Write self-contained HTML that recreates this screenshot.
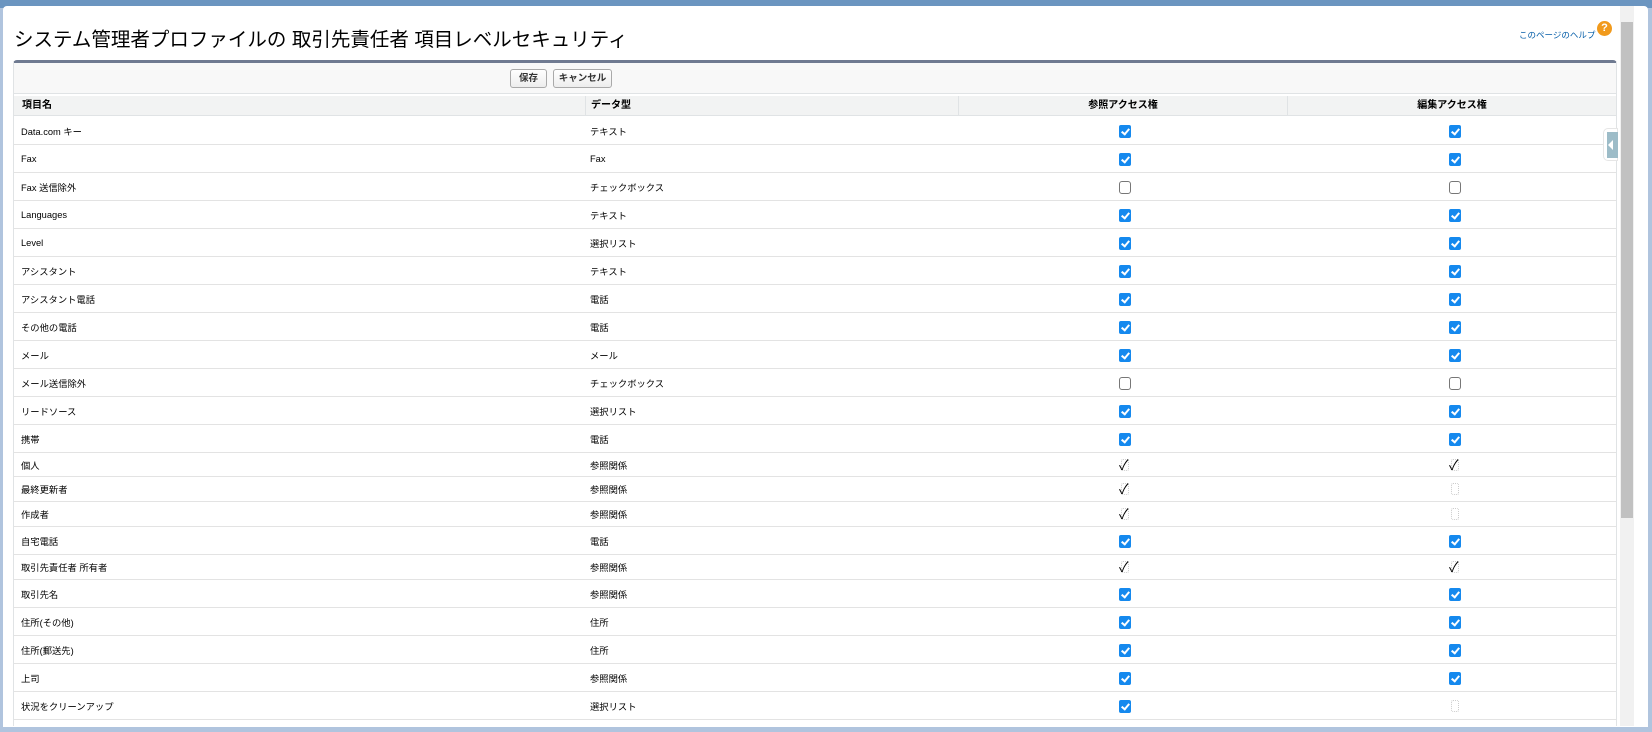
<!DOCTYPE html>
<html><head><meta charset="utf-8"><style>
*{margin:0;padding:0;box-sizing:border-box}
body{width:1652px;height:732px;overflow:hidden;background:#b0c4de;font-family:"Liberation Sans","Noto Sans CJK JP",sans-serif;position:relative}
.top{position:absolute;left:0;top:0;width:1652px;height:8px;background:#6b95c0}
.panel{position:absolute;left:3px;top:6px;width:1645px;height:721px;background:#fff;border-radius:4px 4px 0 0;overflow:hidden}
.title{position:absolute;left:14px;top:23px;font-size:19.5px;color:#000;white-space:nowrap}
.help{position:absolute;left:1519px;top:29px;font-size:8.5px;color:#015ba7;white-space:nowrap}
.hicon{position:absolute;left:1597px;top:21px;width:15px;height:15px;border-radius:50%;background:#f19a1c;color:#fff;font-size:11px;font-weight:bold;text-align:center;line-height:15px}
.clip{position:absolute;left:0;top:0;width:1652px;height:726px;overflow:hidden}
.tbl{position:absolute;left:13px;top:60px;width:1604px;height:700px;border-top:3px solid #6f7a91;border-left:1px solid #e0e3e5;border-right:1px solid #e0e3e5;border-radius:4px 4px 0 0;background:#fff}
.bar{height:31px;background:#f8f8f8;border-bottom:1px solid #e0e3e5;position:relative}
.btn{position:absolute;top:6px;height:19px;border:1px solid #a9a9a9;border-radius:3px;background:linear-gradient(#fff,#ededed);font-size:9.5px;font-weight:bold;text-align:center;line-height:17px;color:#333}
.hdr{position:absolute;top:33px;left:0;width:1602px;height:20px;background:#f2f3f3;border-bottom:1px solid #e0e3e5;font-size:10px;font-weight:bold;color:#000}
.hdr div{position:absolute;top:0;height:20px;line-height:20px;border-right:1px solid #e0e3e5}
.row{position:absolute;left:0;width:1602px;border-bottom:1px solid #e3e3e3;font-size:9.3px;color:#000}
.row span{position:absolute;top:50%;transform:translateY(-50%)}
.cb{position:absolute;top:50%;margin-top:-6px;width:12px;height:13px;border-radius:2px}
.on{background:#1589ee}
.on::after{content:"";position:absolute;left:4px;top:2px;width:3px;height:6px;border:solid #fff;border-width:0 2px 2px 0;transform:rotate(40deg)}
.off{border:1px solid #777;background:#fff;border-radius:3px}
.ro{width:8px;height:12px;margin-top:-6px;border:1px dotted #ccc}
.ro b{position:absolute;left:-3px;top:-5px;font-size:14px;font-weight:normal;color:#000}
.sb{position:absolute;left:1620px;top:6px;width:14px;height:720px;background:#f1f1f1}
.thumb{position:absolute;left:1621px;top:22px;width:12px;height:496px;background:#c1c1c1}
.tab{position:absolute;left:1603px;top:128px;width:15px;height:33px;background:#fff;border:1px solid #e6e6e6;border-radius:5px 0 0 5px}
.tab i{position:absolute;left:3px;top:3px;width:11px;height:26px;background:#9dbcc8}
.tab i::after{content:"";position:absolute;left:1px;top:8px;border-right:5px solid #fff;border-top:5px solid transparent;border-bottom:5px solid transparent}
</style></head><body>
<div class="top"></div>
<div class="panel"></div>
<div class="title">システム管理者プロファイルの 取引先責任者 項目レベルセキュリティ</div>
<div class="help">このページのヘルプ</div>
<div class="hicon">?</div>
<div class="clip">
<div class="tbl">
<div class="bar">
<div class="btn" style="left:496px;width:37px">保存</div>
<div class="btn" style="left:539px;width:59px">キャンセル</div>
</div>
<div class="hdr">
<div style="left:0;width:572px;padding-left:8px">項目名</div>
<div style="left:572px;width:373px;padding-left:5px">データ型</div>
<div style="left:945px;width:329px;text-align:center">参照アクセス権</div>
<div style="left:1274px;width:328px;text-align:center;border-right:none">編集アクセス権</div>
</div>
</div>
<div id="rows"></div>
</div>
<div class="tab"><i></i></div>
<div class="sb"></div>
<div class="thumb"></div>
<script>
var d=[["Data.com キー","テキスト",1,1,28],["Fax","Fax",1,1,28],["Fax 送信除外","チェックボックス",0,0,28],["Languages","テキスト",1,1,28],["Level","選択リスト",1,1,28],["アシスタント","テキスト",1,1,28],["アシスタント電話","電話",1,1,28],["その他の電話","電話",1,1,28],["メール","メール",1,1,28],["メール送信除外","チェックボックス",0,0,28],["リードソース","選択リスト",1,1,28],["携帯","電話",1,1,28],["個人","参照関係",2,2,24],["最終更新者","参照関係",2,3,25],["作成者","参照関係",2,3,25],["自宅電話","電話",1,1,28],["取引先責任者 所有者","参照関係",2,2,25],["取引先名","参照関係",1,1,28],["住所(その他)","住所",1,1,28],["住所(郵送先)","住所",1,1,28],["上司","参照関係",1,1,28],["状況をクリーンアップ","選択リスト",1,3,28],["","",-1,-1,28]];
function cb(v,x){if(v<0)return"";if(v==1)return'<div class="cb on" style="left:'+x+'px"></div>';if(v==0)return'<div class="cb off" style="left:'+x+'px"></div>';if(v==2)return'<div class="cb ro" style="left:'+(x+2)+'px"><b>✓</b></div>';return'<div class="cb ro" style="left:'+(x+2)+'px"></div>';}
var y=117,h="";d.forEach(function(r){h+='<div class="row" style="left:14px;top:'+y+'px;height:'+r[4]+'px"><span style="left:7px">'+r[0]+'</span><span style="left:576px">'+r[1]+'</span>'+cb(r[2],1105)+cb(r[3],1435)+'</div>';y+=r[4];});
document.getElementById("rows").innerHTML=h;
</script>
</body></html>
